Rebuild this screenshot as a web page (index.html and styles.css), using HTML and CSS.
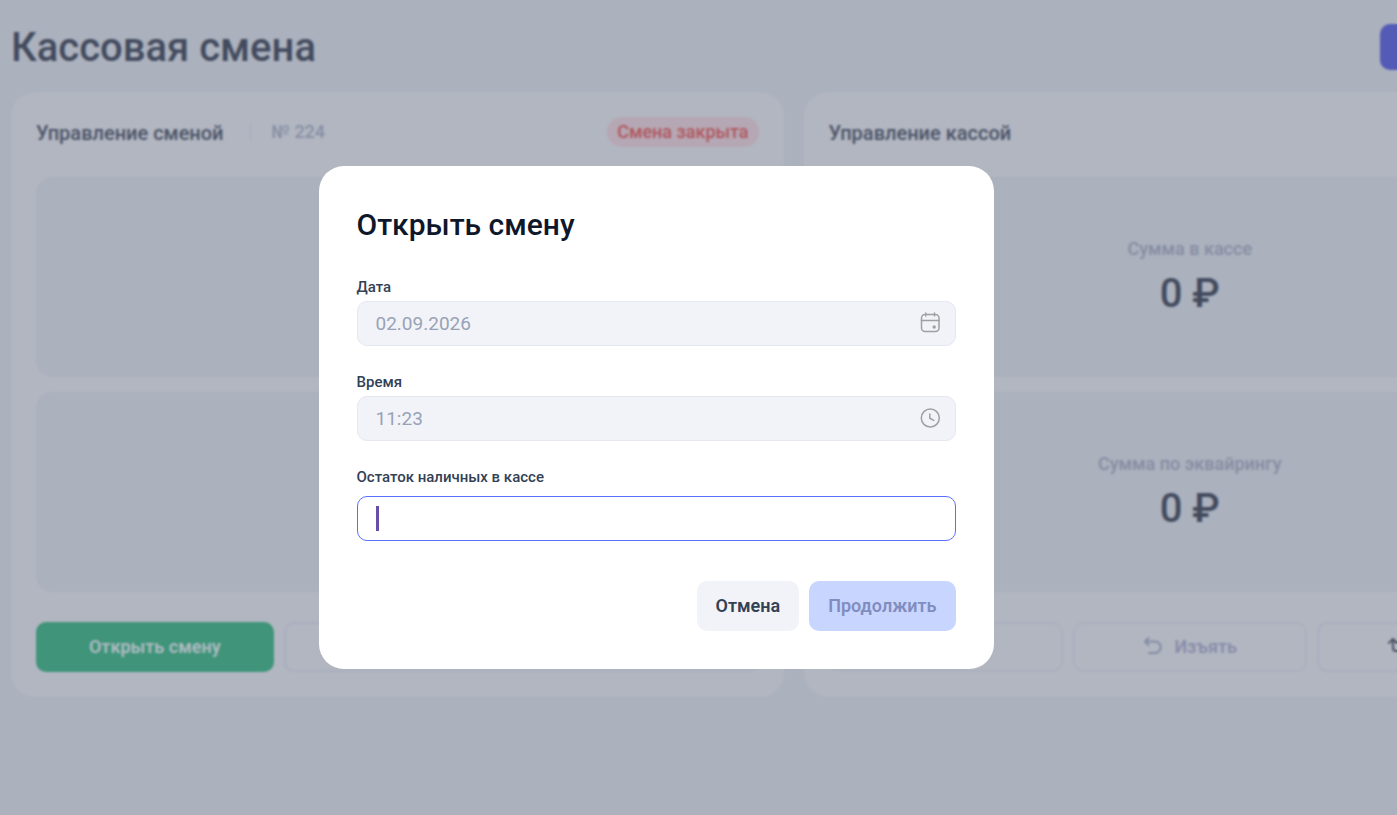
FILE: index.html
```html
<!DOCTYPE html>
<html lang="ru">
<head>
<meta charset="utf-8">
<meta name="viewport" content="width=device-width, initial-scale=1">
<title>Кассовая смена</title>
<link rel="stylesheet" href="styles.css">
</head>
<body>
<div class="app">
<main class="page">
  <header class="page-header">
    <h1 class="page-title">Кассовая смена</h1>
    <button class="header-action" type="button" aria-label="Действия"></button>
  </header>
  <div class="cards">
    <section class="card">
      <div class="card-header">
        <h2 class="card-title">Управление сменой</h2>
        <span class="shift-number">№ 224</span>
        <span class="status">Смена закрыта</span>
      </div>
      <div class="panel"></div>
      <div class="panel"></div>
      <div class="actions actions-shift">
        <button class="btn btn-green" type="button">Открыть смену</button>
        <button class="btn" type="button" aria-label="Закрыть смену"></button>
      </div>
    </section>
    <section class="card">
      <div class="card-header">
        <h2 class="card-title">Управление кассой</h2>
      </div>
      <div class="panel">
        <span class="panel-label">Сумма в кассе</span>
        <strong class="panel-value">0 ₽</strong>
      </div>
      <div class="panel">
        <span class="panel-label">Сумма по эквайрингу</span>
        <strong class="panel-value">0 ₽</strong>
      </div>
      <div class="actions actions-cash">
        <button class="btn btn-muted" type="button" aria-label="Внести"></button>
        <button class="btn btn-muted" type="button">
          <svg class="btn-icon" viewBox="0 0 20 20" aria-hidden="true"><path d="M6.500 2 3 5.500 6.500 9M3.500 5.500H13a5.500 5.500 0 0 1 0 11.500H7"/></svg>
          Изъять
        </button>
        <button class="btn btn-transfer" type="button" aria-label="Перевод">
          <svg class="btn-icon" viewBox="0 0 20 20" aria-hidden="true"><path d="M2 7l4-4 4 4M6 4v8a3 3 0 0 0 3 3h5M12 5h2a3 3 0 0 1 3 3v8M13 13l4 4 4-4"/></svg>
        </button>
      </div>
    </section>
  </div>
</main>
</div>

<div class="overlay">
  <form class="modal" role="dialog" aria-modal="true" aria-labelledby="modal-title">
    <h2 class="modal-title" id="modal-title">Открыть смену</h2>
    <div class="field">
      <label class="label" for="date">Дата</label>
      <div class="control">
        <input class="input" id="date" type="text" value="02.09.2026" disabled>
        <svg class="input-icon" viewBox="0 0 20 20" aria-hidden="true"><rect x="1.500" y="1.500" width="17.500" height="17" rx="3.500"/><path d="M1.500 7.500H19M5.800 0v3M14.500 0v3"/><circle class="dot" cx="14.200" cy="14" r="1.700"/></svg>
      </div>
    </div>
    <div class="field">
      <label class="label" for="time">Время</label>
      <div class="control">
        <input class="input" id="time" type="text" value="11:23" disabled>
        <svg class="input-icon" viewBox="0 0 20 20" aria-hidden="true"><circle cx="10.300" cy="10" r="9"/><path d="M9.800 6v4.200l4 2.200"/></svg>
      </div>
    </div>
    <div class="field">
      <label class="label label-cash" for="cash">Остаток наличных в кассе</label>
      <div class="control">
        <input class="input input-active" id="cash" type="text">
        <span class="caret"></span>
      </div>
    </div>
    <div class="modal-actions">
      <button class="modal-btn" type="button">Отмена</button>
      <button class="modal-btn modal-btn-primary" type="submit" disabled>Продолжить</button>
    </div>
  </form>
</div>
</body>
</html>
```

FILE: styles.css
```css
* { box-sizing: border-box; }

body {
  margin: 0;
  background: #abb1bd;
  font-family: Roboto, "Liberation Sans", sans-serif;
}

button, input { font: inherit; }

h1, h2 { margin: 0; font-weight: 500; }

.app {
  min-height: 100vh;
  overflow: hidden;
}

.page {
  min-width: 1587px;
  padding: 24px 11px;
}

.page-header {
  display: flex;
  align-items: flex-start;
  justify-content: space-between;
  margin-bottom: 20px;
}

.page-title {
  font-size: 40px;
  line-height: 48px;
  color: #434b5e;
}

.header-action {
  width: 196px;
  height: 46px;
  border: 0;
  border-radius: 10px;
  background: #545bb7;
}

.cards {
  display: grid;
  grid-template-columns: 1fr 1fr;
  gap: 20px;
}

.card {
  padding: 25px;
  border-radius: 24px;
  background: #b2b6c1;
}

.card-header {
  display: flex;
  align-items: center;
  height: 30px;
  margin-bottom: 30px;
}

.card-title {
  align-self: flex-start;
  font-size: 20px;
  line-height: 32px;
  color: #4b5366;
}

.shift-number {
  margin-left: 26px;
  padding-left: 21px;
  border-left: 1px solid #a5abbc;
  font-size: 18px;
  line-height: 16px;
  font-weight: 500;
  color: #868fa5;
}

.status {
  margin-left: auto;
  padding: 0 10px;
  border-radius: 15px;
  background: #b5a7b3;
  font-size: 18px;
  line-height: 30px;
  font-weight: 500;
  color: #b0575f;
}

.panel {
  display: flex;
  flex-direction: column;
  align-items: center;
  justify-content: center;
  height: 200px;
  margin-bottom: 15px;
  padding-top: 3px;
  border-radius: 16px;
  background: #abb1bd;
}

.panel-label {
  font-size: 18px;
  line-height: 24px;
  font-weight: 500;
  color: #868da3;
}

.panel-value {
  margin-top: 7px;
  font-size: 40px;
  line-height: 52px;
  font-weight: 500;
  color: #434b5e;
}

.actions {
  display: grid;
  gap: 10px;
  padding-top: 15px;
}

.actions-shift { grid-template-columns: 1fr 2fr; }

.actions-cash { grid-template-columns: 1fr 1fr 1fr; }

.btn {
  display: flex;
  align-items: center;
  justify-content: center;
  gap: 12px;
  height: 50px;
  padding: 0 0 2px;
  border: 2px solid #a9adbf;
  border-radius: 10px;
  background: transparent;
  font-size: 18px;
  font-weight: 600;
  color: #4b5366;
}

.btn-green {
  border-color: #3f9479;
  background: #3f9479;
  color: #b2bcc4;
}

.btn-muted {
  border-color: #acb0be;
  color: #888da9;
}

.btn-icon {
  width: 20px;
  height: 20px;
  fill: none;
  stroke: currentColor;
  stroke-width: 2;
  stroke-linecap: round;
  stroke-linejoin: round;
}

.btn-muted .btn-icon { color: #828ca1; }

.btn-transfer {
  justify-content: flex-start;
  padding-left: 68px;
}

.overlay {
  position: fixed;
  inset: 0;
  display: flex;
  align-items: center;
  justify-content: center;
  padding: 20px 85px 0 0;
  backdrop-filter: blur(1px);
}

.modal {
  width: 100%;
  max-width: 675px;
  padding: 38px;
  border-radius: 25px;
  background: #fff;
}

.modal-title {
  margin-bottom: 31px;
  font-size: 30px;
  line-height: 42px;
  color: #0f172a;
}

.field { margin-bottom: 26px; }

.label {
  display: block;
  margin-bottom: 4px;
  font-size: 15px;
  line-height: 20px;
  font-weight: 500;
  color: #334155;
}

.label-cash { margin-bottom: 9px; }

.control { position: relative; }

.input {
  display: block;
  width: 100%;
  height: 45px;
  padding: 0 50px 0 18px;
  border: 1px solid #e5e7f1;
  border-radius: 10px;
  outline: 0;
  background: #f2f3f8;
  font-size: 19px;
  color: #98a2b5;
}

.input-active {
  border-color: #5b70fa;
  background: #fff;
  color: #334155;
}

.input-icon {
  position: absolute;
  top: 12px;
  right: 16px;
  width: 20px;
  height: 20px;
  overflow: visible;
  fill: none;
  stroke: #a0a0a3;
  stroke-width: 1.5;
  stroke-linecap: round;
}

.dot { fill: #a0a0a3; stroke: none; }

.caret {
  position: absolute;
  top: 10px;
  left: 19px;
  width: 3px;
  height: 25px;
  background: #664ea9;
}

.modal-actions {
  display: flex;
  justify-content: flex-end;
  gap: 10px;
  padding-top: 14px;
}

.modal-btn {
  height: 50px;
  padding: 0 19px 2px;
  border: 0;
  border-radius: 10px;
  background: #f2f3f8;
  font-size: 18px;
  font-weight: 600;
  color: #334155;
}

.modal-btn-primary {
  background: #c8d6ff;
  color: #818dbf;
}
```
